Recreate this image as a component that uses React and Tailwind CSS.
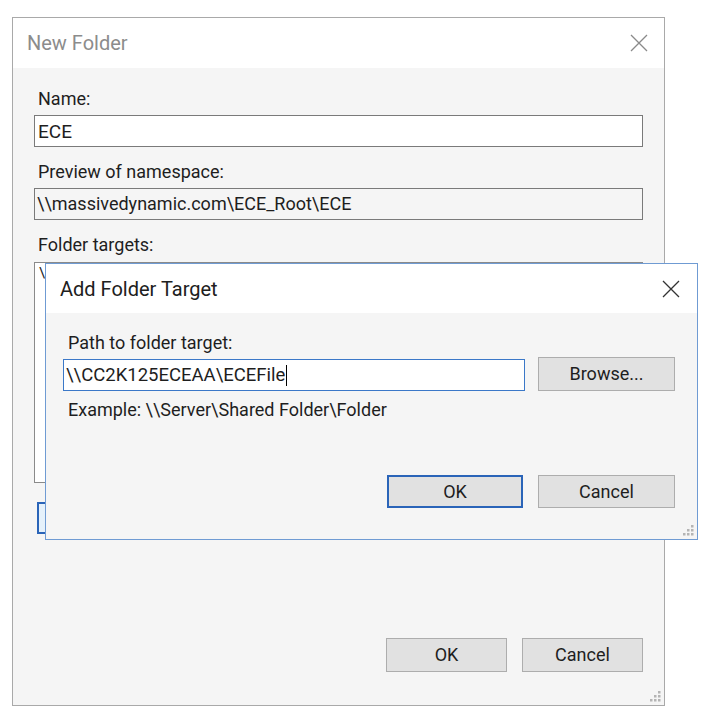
import React from "react";

const font = { fontFamily: "Roboto, 'Liberation Sans', sans-serif" };

function CloseX({ color, size = 18 }) {
  return (
    <svg width={size} height={size} viewBox="0 0 18 18">
      <path d="M1 1 L17 17 M17 1 L1 17" stroke={color} strokeWidth="1.3" fill="none" />
    </svg>
  );
}

function Grip() {
  const dots = [
    [8, 0],
    [4, 4],
    [8, 4],
    [0, 8],
    [4, 8],
    [8, 8],
  ];
  return (
    <svg width="11" height="11" viewBox="0 0 11 11">
      {dots.map(([x, y], i) => (
        <rect key={i} x={x} y={y} width="2.5" height="2.5" fill="#b4b4b4" />
      ))}
    </svg>
  );
}

export default function App() {
  return (
    <div
      className="relative w-[710px] h-[718px] bg-white text-[18px] text-[#1e1e1e] pt-[17px] pl-[12px]"
      style={font}
    >
      {/* Outer dialog */}
      <div className="w-[653px] h-[689px] border border-[#a9a9a9] flex flex-col bg-[#f5f5f5]">
        <div className="h-[50px] bg-white flex items-center justify-between pl-[14px] pr-[16px]">
          <span className="text-[20px] text-[#8c8c8c] leading-none">New Folder</span>
          <CloseX color="#8a8a8a" />
        </div>
        <div className="relative flex-1 flex flex-col px-[21px] pt-[21px] pb-[33px]">
          <div className="h-[20px] leading-[20px] pl-[4px]">Name:</div>
          <div className="mt-[6px] h-[32px] border border-[#7a7a7a] bg-white flex items-center px-[3px] leading-none text-[19px]">
            ECE
          </div>
          <div className="mt-[15px] h-[20px] leading-[20px] pl-[4px]">Preview of namespace:</div>
          <div className="mt-[6px] h-[32px] border border-[#7a7a7a] bg-[#f5f5f5] flex items-center px-[2px] leading-none">
            \\massivedynamic.com\ECE_Root\ECE
          </div>
          <div className="mt-[15px] h-[20px] leading-[20px] pl-[4px]">Folder targets:</div>
          <div className="mt-[7px] h-[221px] border border-[#8a8a8a] bg-white px-[4px] pt-[1px] text-[15px] leading-[18px]">
            \
          </div>
          <div className="mt-[19px] ml-[3px] w-[120px] h-[32px] border-2 border-[#2a64b8] bg-[#e5f1fb]" />
          <div className="mt-auto flex justify-end gap-[15px]">
            <div className="w-[121px] h-[34px] border border-[#adadad] bg-[#e1e1e1] flex items-center justify-center leading-none">
              OK
            </div>
            <div className="w-[121px] h-[34px] border border-[#adadad] bg-[#e1e1e1] flex items-center justify-center leading-none">
              Cancel
            </div>
          </div>
          <div className="absolute right-[3px] bottom-[3px]">
            <Grip />
          </div>
        </div>
      </div>

      {/* Add Folder Target dialog (overlay) */}
      <div className="absolute left-[45px] top-[263px] w-[653px] h-[277px] border border-[#6f9bd3] bg-[#f5f5f5] flex flex-col">
        <div className="h-[49px] bg-white flex items-center justify-between pl-[14px] pr-[17px]">
          <span className="text-[20px] text-[#202020] leading-none">Add Folder Target</span>
          <CloseX color="#333333" />
        </div>
        <div className="relative flex-1 flex flex-col pl-[17px] pr-[22px] pt-[20px] pb-[31px]">
          <div className="h-[20px] leading-[20px] pl-[5px]">Path to folder target:</div>
          <div className="mt-[4px] flex items-end gap-[13px]">
            <div className="w-[462px] h-[32px] border border-[#3b78c8] bg-white flex items-center px-[2px] leading-none text-[18.5px]">
              <span>\\CC2K125ECEAA\ECEFile</span>
              <span className="w-px h-[21px] bg-black ml-[1px]" />
            </div>
            <div className="w-[137px] h-[34px] border border-[#adadad] bg-[#e1e1e1] flex items-center justify-center leading-none">
              Browse...
            </div>
          </div>
          <div className="mt-[9px] h-[20px] leading-[20px] pl-[5px]">Example: \\Server\Shared Folder\Folder</div>
          <div className="mt-auto flex justify-end gap-[15px]">
            <div className="w-[136px] h-[33px] border-2 border-[#2a64b8] bg-[#e1e1e1] flex items-center justify-center leading-none">
              OK
            </div>
            <div className="w-[137px] h-[33px] border border-[#adadad] bg-[#e1e1e1] flex items-center justify-center leading-none">
              Cancel
            </div>
          </div>
          <div className="absolute right-[3px] bottom-[3px]">
            <Grip />
          </div>
        </div>
      </div>
    </div>
  );
}
